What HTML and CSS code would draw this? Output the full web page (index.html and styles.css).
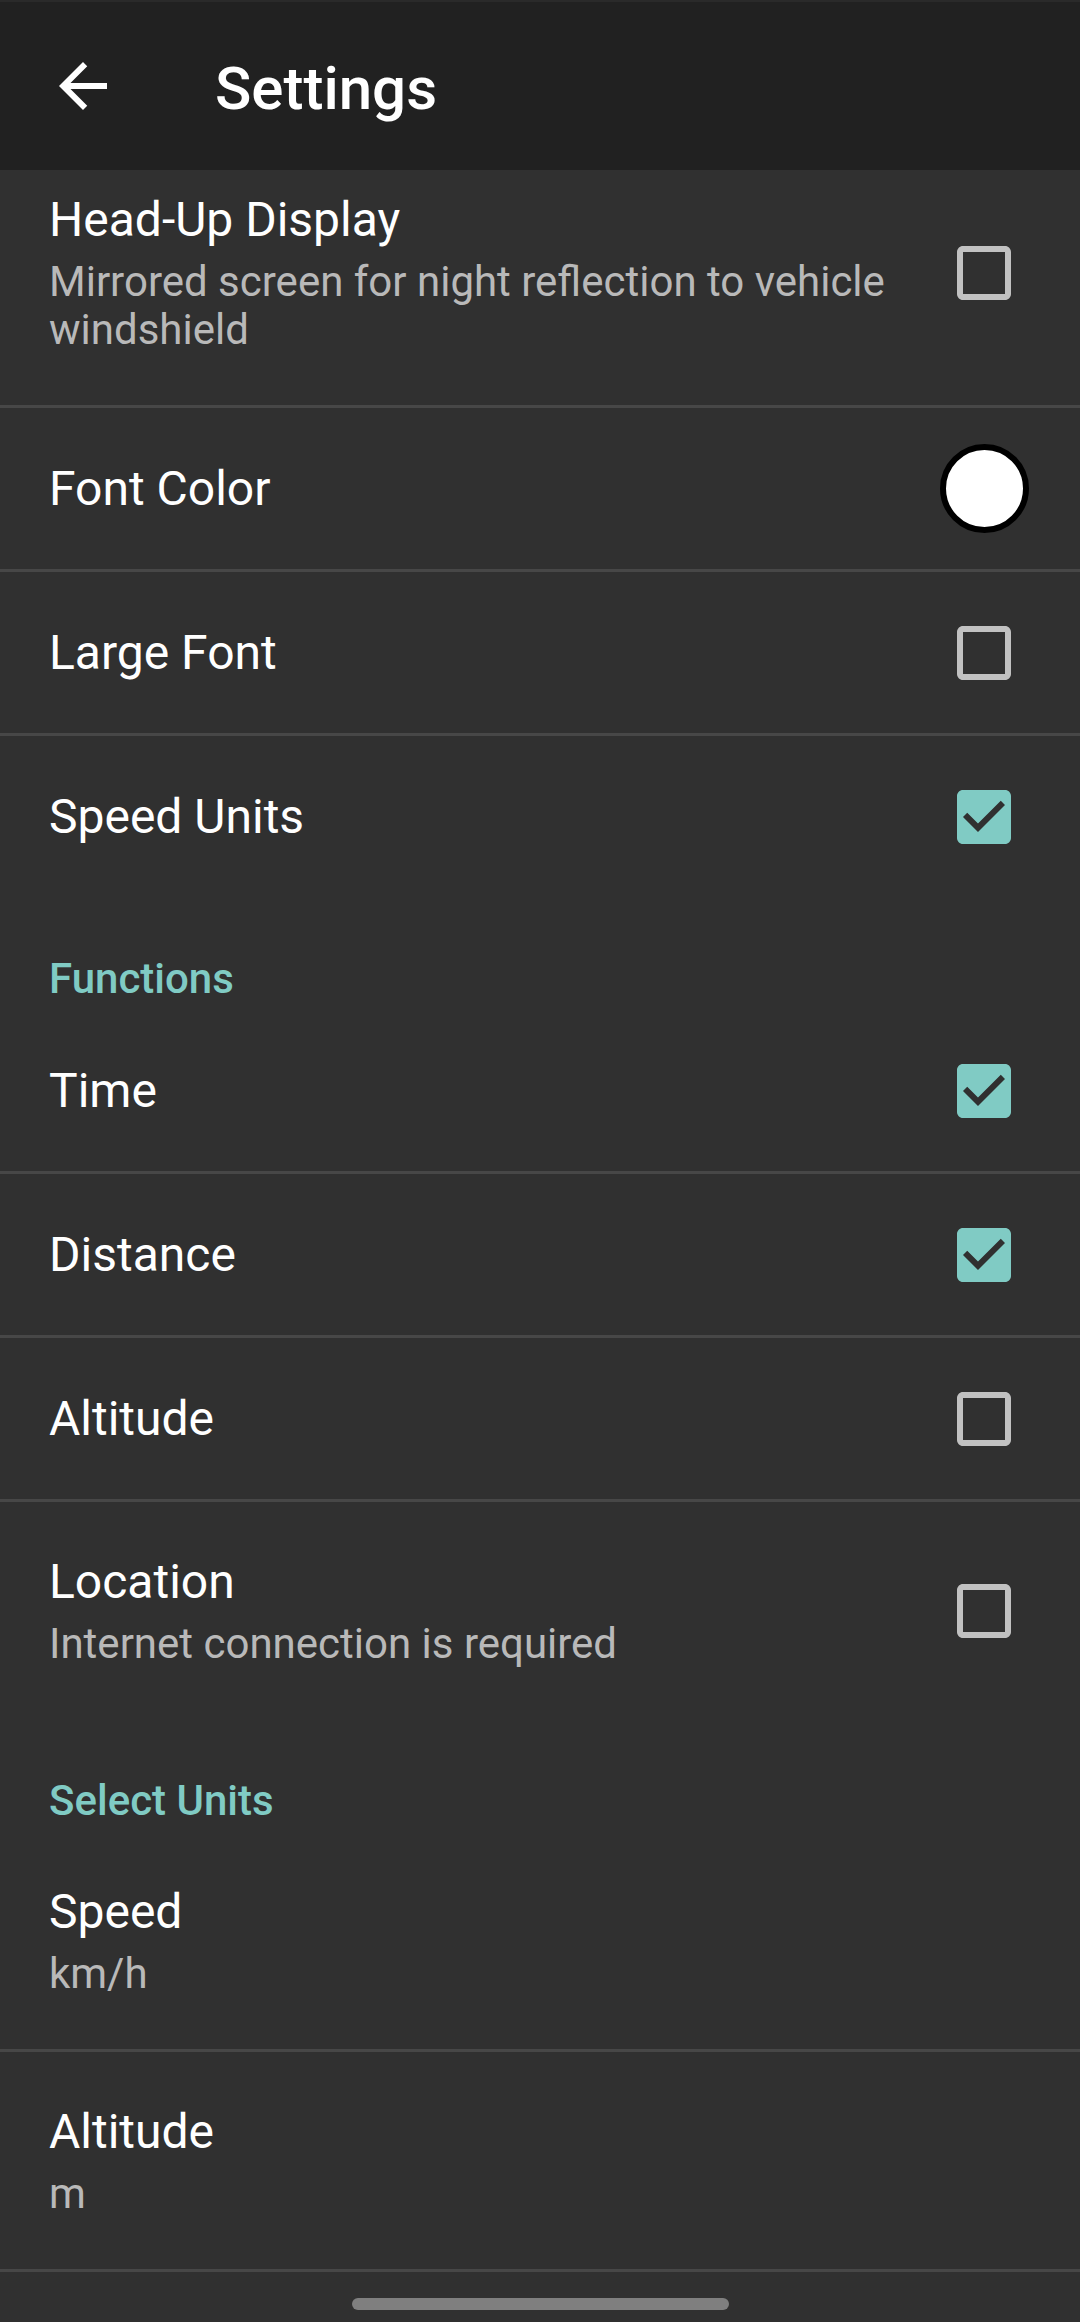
FILE: index.html
```html
<!DOCTYPE html>
<html lang="en">
<head>
    <meta charset="UTF-8">
    <meta name="viewport" content="width=device-width, initial-scale=1.0">
    <title>Settings</title>
    <link rel="stylesheet" href="styles.css">
</head>
<body>
    <div class="app">
        <!-- Toolbar -->
        <header class="toolbar">
            <button class="back" aria-label="Back">
                <svg viewBox="0 0 24 24" width="72" height="72"><path fill="currentColor" d="M20 11H7.83l5.59-5.59L12 4l-8 8 8 8 1.41-1.41L7.83 13H20v-2z"/></svg>
            </button>
            <h1>Settings</h1>
        </header>

        <!-- List is scrolled a little: first row slides under the toolbar -->
        <main class="prefs">
            <div class="pref">
                <div class="pref-text">
                    <div class="pref-title">Head-Up Display</div>
                    <div class="pref-summary">Mirrored screen for night reflection to vehicle windshield</div>
                </div>
                <div class="pref-widget">
                    <svg class="checkbox" viewBox="0 0 24 24"><path d="M19 5v14H5V5h14m0-2H5c-1.1 0-2 .9-2 2v14c0 1.1.9 2 2 2h14c1.1 0 2-.9 2-2V5c0-1.1-.9-2-2-2z"/></svg>
                </div>
            </div>

            <div class="pref">
                <div class="pref-text">
                    <div class="pref-title">Font Color</div>
                </div>
                <div class="pref-widget"><span class="swatch"></span></div>
            </div>

            <div class="pref">
                <div class="pref-text">
                    <div class="pref-title">Large Font</div>
                </div>
                <div class="pref-widget">
                    <svg class="checkbox" viewBox="0 0 24 24"><path d="M19 5v14H5V5h14m0-2H5c-1.1 0-2 .9-2 2v14c0 1.1.9 2 2 2h14c1.1 0 2-.9 2-2V5c0-1.1-.9-2-2-2z"/></svg>
                </div>
            </div>

            <div class="pref plain">
                <div class="pref-text">
                    <div class="pref-title">Speed Units</div>
                </div>
                <div class="pref-widget">
                    <svg class="checkbox checked" viewBox="0 0 24 24"><path d="M19 3H5c-1.11 0-2 .9-2 2v14c0 1.1.89 2 2 2h14c1.11 0 2-.9 2-2V5c0-1.1-.89-2-2-2zm-9 14l-5-5 1.41-1.41L10 14.17l7.59-7.59L19 8l-9 9z"/></svg>
                </div>
            </div>

            <div class="pref-category">Functions</div>

            <div class="pref">
                <div class="pref-text">
                    <div class="pref-title">Time</div>
                </div>
                <div class="pref-widget">
                    <svg class="checkbox checked" viewBox="0 0 24 24"><path d="M19 3H5c-1.11 0-2 .9-2 2v14c0 1.1.89 2 2 2h14c1.11 0 2-.9 2-2V5c0-1.1-.89-2-2-2zm-9 14l-5-5 1.41-1.41L10 14.17l7.59-7.59L19 8l-9 9z"/></svg>
                </div>
            </div>

            <div class="pref">
                <div class="pref-text">
                    <div class="pref-title">Distance</div>
                </div>
                <div class="pref-widget">
                    <svg class="checkbox checked" viewBox="0 0 24 24"><path d="M19 3H5c-1.11 0-2 .9-2 2v14c0 1.1.89 2 2 2h14c1.11 0 2-.9 2-2V5c0-1.1-.89-2-2-2zm-9 14l-5-5 1.41-1.41L10 14.17l7.59-7.59L19 8l-9 9z"/></svg>
                </div>
            </div>

            <div class="pref">
                <div class="pref-text">
                    <div class="pref-title">Altitude</div>
                </div>
                <div class="pref-widget">
                    <svg class="checkbox" viewBox="0 0 24 24"><path d="M19 5v14H5V5h14m0-2H5c-1.1 0-2 .9-2 2v14c0 1.1.9 2 2 2h14c1.1 0 2-.9 2-2V5c0-1.1-.9-2-2-2z"/></svg>
                </div>
            </div>

            <div class="pref plain">
                <div class="pref-text">
                    <div class="pref-title">Location</div>
                    <div class="pref-summary">Internet connection is required</div>
                </div>
                <div class="pref-widget">
                    <svg class="checkbox" viewBox="0 0 24 24"><path d="M19 5v14H5V5h14m0-2H5c-1.1 0-2 .9-2 2v14c0 1.1.9 2 2 2h14c1.1 0 2-.9 2-2V5c0-1.1-.9-2-2-2z"/></svg>
                </div>
            </div>

            <div class="pref-category">Select Units</div>

            <div class="pref">
                <div class="pref-text">
                    <div class="pref-title">Speed</div>
                    <div class="pref-summary">km/h</div>
                </div>
            </div>

            <div class="pref">
                <div class="pref-text">
                    <div class="pref-title">Altitude</div>
                    <div class="pref-summary">m</div>
                </div>
            </div>
        </main>

        <!-- Gesture navigation handle -->
        <div class="gesture-bar"><span class="handle"></span></div>
    </div>
</body>
</html>
```

FILE: styles.css
```css
:root {
    --bg: #303030;
    --bar-bg: #212121;
    --divider: #474747;
    --text-primary: #ffffff;
    --text-secondary: #b9b9b9;
    --accent: #80cbc4;
    --box-border: #c1c1c1;
}

body {
    margin: 0;
    background: var(--bg);
    color: var(--text-primary);
    font-family: Roboto, "Noto Sans", sans-serif;
    overflow: hidden;
}

.app {
    height: 2322px;
}

/* Toolbar */
.toolbar {
    position: relative;
    z-index: 1;
    display: flex;
    align-items: center;
    height: 168px;
    border-top: 2px solid #2a2a2a;
    padding-left: 47px;
    background: var(--bar-bg);
}

.back {
    display: flex;
    width: 72px;
    height: 72px;
    padding: 0;
    border: none;
    background: none;
    color: var(--text-primary);
}

.toolbar h1 {
    margin: 5px 0 0 96px;
    font-size: 60px;
    font-weight: 500;
}

/* Preference list */
.prefs {
    margin-top: -30px;
}

.pref {
    display: flex;
    align-items: center;
    min-height: 161px;
    padding: 0 24px 0 49px;
    border-bottom: 3px solid var(--divider);
}

.pref.plain {
    border-bottom: none;
}

.pref-text {
    flex: 1;
    min-width: 0;
    padding: 48px 0;
}

.pref-title {
    font-size: 48px;
    line-height: 64px;
}

.pref-summary {
    padding: 6px 0 3px;
    font-size: 42px;
    line-height: 48px;
    color: var(--text-secondary);
}

.pref-widget {
    display: flex;
    justify-content: center;
    align-items: center;
    width: 144px;
}

.checkbox {
    width: 72px;
    height: 72px;
    fill: var(--box-border);
}

.checkbox.checked {
    fill: var(--accent);
}

.swatch {
    width: 89px;
    height: 89px;
    box-sizing: border-box;
    border: 6px solid #000;
    border-radius: 50%;
    background: #fff;
}

.pref-category {
    padding: 57px 49px 7px;
    font-size: 42px;
    font-weight: 500;
    line-height: 49px;
    color: var(--accent);
}

/* Gesture bar */
.gesture-bar {
    display: flex;
    justify-content: center;
    padding-top: 26px;
}

.handle {
    width: 377px;
    height: 12px;
    border-radius: 6px;
    background: #7f7f7f;
}
```
